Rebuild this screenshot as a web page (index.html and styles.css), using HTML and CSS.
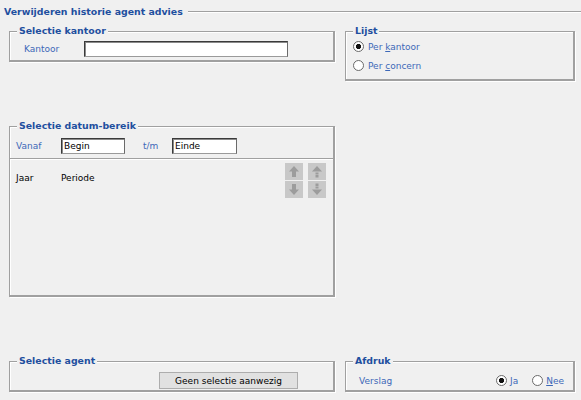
FILE: index.html
```html
<!DOCTYPE html>
<html lang="nl">
<head>
<meta charset="utf-8">
<title>Verwijderen historie agent advies</title>
<link rel="stylesheet" href="styles.css">
</head>
<body>
<div class="screen">
  <div class="title-bar">
    <h1 class="title">Verwijderen historie agent advies</h1>
    <span class="rule"></span>
  </div>

  <div class="columns">
    <div class="col-left">
      <section class="group group-kantoor">
        <div class="group-head"><span>Selectie kantoor</span></div>
        <div class="kantoor-row">
          <label class="label kantoor-label" for="kantoor">Kantoor</label>
          <input class="text-input kantoor-input" id="kantoor" type="text">
        </div>
      </section>

      <section class="group group-datum">
        <div class="group-head"><span>Selectie datum-bereik</span></div>
        <div class="range-row">
          <label class="label vanaf-label" for="vanaf">Vanaf</label>
          <input class="text-input date-input" id="vanaf" type="text" value="Begin">
          <label class="label tm-label" for="tm">t/m</label>
          <input class="text-input date-input date-end" id="tm" type="text" value="Einde">
        </div>
        <div class="separator"></div>
        <div class="period-list">
          <div class="period-cols">
            <span class="col-jaar">Jaar</span>
            <span class="col-periode">Periode</span>
          </div>
          <div class="sort-buttons">
            <button class="sort-btn" type="button" aria-label="Omhoog">
              <svg viewBox="0 0 18 17" width="18" height="17"><path d="M9 3 L14 8.5 H11 V14 H7 V8.5 H4 Z"/></svg>
            </button>
            <button class="sort-btn" type="button" aria-label="Naar boven">
              <svg viewBox="0 0 18 17" width="18" height="17"><path d="M9 3 L14 8.5 H4 Z"/><rect x="7.5" y="9.5" width="3" height="2"/><rect x="7.5" y="12" width="3" height="2.5"/></svg>
            </button>
            <button class="sort-btn" type="button" aria-label="Omlaag">
              <svg viewBox="0 0 18 17" width="18" height="17"><path d="M9 14 L14 8.5 H11 V3 H7 V8.5 H4 Z"/></svg>
            </button>
            <button class="sort-btn" type="button" aria-label="Naar beneden">
              <svg viewBox="0 0 18 17" width="18" height="17"><path d="M9 14 L14 8.5 H4 Z"/><rect x="7.5" y="5.5" width="3" height="2"/><rect x="7.5" y="2.5" width="3" height="2.5"/></svg>
            </button>
          </div>
        </div>
      </section>
    </div>

    <div class="col-right">
      <section class="group group-lijst">
        <div class="group-head"><span>Lijst</span></div>
        <div class="radio-list">
          <label class="radio-row"><input type="radio" name="lijst" checked><span>Per <u>k</u>antoor</span></label>
          <label class="radio-row"><input type="radio" name="lijst"><span>Per <u>c</u>oncern</span></label>
        </div>
      </section>
    </div>
  </div>

  <div class="bottom-row">
    <section class="group group-agent">
      <div class="group-head"><span>Selectie agent</span></div>
      <button class="push-btn" type="button">Geen selectie aanwezig</button>
    </section>
    <section class="group group-afdruk">
      <div class="group-head"><span>Afdruk</span></div>
      <div class="afdruk-row">
        <span class="label">Verslag</span>
        <div class="afdruk-options">
          <label class="radio-row"><input type="radio" name="verslag" checked><span><u>J</u>a</span></label>
          <label class="radio-row radio-nee"><input type="radio" name="verslag"><span><u>N</u>ee</span></label>
        </div>
      </div>
    </section>
  </div>
</div>
</body>
</html>
```

FILE: styles.css
```css
* {
  box-sizing: border-box;
}

html,
body {
  margin: 0;
}

body {
  background: #f0f0f0;
  font-family: "DejaVu Sans", Verdana, sans-serif;
  font-size: 9px;
  color: #000;
}

.screen {
  height: 400px;
  display: flex;
  flex-direction: column;
  padding-bottom: 8px;
}

/* window title with etched rule */
.title-bar {
  display: flex;
  align-items: center;
  height: 24px;
  padding-left: 4px;
}

.title {
  margin: 0;
  font-size: 9.4px;
  font-weight: bold;
  line-height: 14px;
  color: #1f4f9f;
}

.rule {
  flex: 1;
  height: 2px;
  margin: -1px 0 0 5px;
  border-top: 1px solid #a0a0a0;
  border-bottom: 1px solid #fff;
}

/* group boxes */
.group {
  border: 1px solid #a0a0a0;
  border-right-width: 2px;
  border-bottom-width: 2px;
  box-shadow: 1px 1px 0 #fff, inset 1px 1px 0 #fff;
}

.group-head {
  height: 14px;
  margin-top: -8px;
  padding-left: 7px;
  line-height: 14px;
}

.group-head span {
  background: #f0f0f0;
  padding: 0 2px;
  font-size: 9.4px;
  font-weight: bold;
  color: #1f4f9f;
}

.label {
  color: #3d68b8;
}

.text-input {
  height: 16px;
  margin: 0;
  padding: 0 2px;
  border: 1px solid #3a3a3a;
  border-right-color: #6a6a6a;
  border-bottom-color: #9a9a9a;
  box-shadow: inset 1px 1px 0 #8a8a8a;
  background: #fff;
  font: 9px "DejaVu Sans", Verdana, sans-serif;
  color: #000;
}

/* layout */
.columns {
  display: flex;
  gap: 10px;
  padding-left: 9px;
  margin-top: 7px;
}

.col-left {
  width: 326px;
  display: flex;
  flex-direction: column;
  gap: 64px;
}

.col-right {
  width: 230px;
}

/* Selectie kantoor */
.group-kantoor {
  height: 31px;
}

.kantoor-row {
  display: flex;
  align-items: center;
  margin-top: 3px;
  padding-left: 14px;
}

.kantoor-label {
  width: 60px;
}

.kantoor-input {
  width: 204px;
}

/* Selectie datum-bereik */
.group-datum {
  height: 171px;
}

.range-row {
  display: flex;
  align-items: center;
  height: 20px;
  margin-top: 3px;
  padding-left: 6px;
}

.vanaf-label {
  width: 45px;
}

.date-input {
  width: 64px;
}

.date-end {
  width: 65px;
}

.tm-label {
  width: 29px;
  margin-left: 18px;
}

.separator {
  height: 2px;
  margin-top: 2px;
  border-top: 1px solid #a0a0a0;
  border-bottom: 1px solid #fff;
}

.period-list {
  display: flex;
  justify-content: space-between;
  padding: 3px 7px 0 6px;
}

.period-cols {
  display: flex;
  margin-top: 8px;
  line-height: 14px;
}

.col-jaar {
  width: 45px;
}

.sort-buttons {
  display: grid;
  grid-template-columns: 18px 18px;
  grid-template-rows: 17px 17px;
  column-gap: 5px;
  row-gap: 1px;
}

.sort-btn {
  width: 18px;
  height: 17px;
  margin: 0;
  padding: 0;
  border: 0;
  background: #c8c8c8;
  display: block;
}

.sort-btn svg {
  display: block;
  fill: #9c9c9c;
}

/* Lijst */
.group-lijst {
  height: 50px;
}

.radio-list {
  margin-top: -1px;
  padding-left: 7px;
}

.radio-row {
  display: flex;
  align-items: center;
  height: 19px;
  color: #3d68b8;
}

.radio-row input {
  appearance: none;
  width: 11px;
  height: 11px;
  margin: 0 4px 0 0;
  border: 1px solid #6a6a6a;
  border-radius: 50%;
  background: #fff;
}

.radio-row input:checked {
  background: radial-gradient(circle, #111 0 2.4px, #fff 2.9px);
}

/* bottom groups */
.bottom-row {
  display: flex;
  gap: 10px;
  margin-top: auto;
  padding-left: 9px;
}

.group-agent {
  width: 326px;
  height: 31px;
}

.push-btn {
  display: block;
  width: 139px;
  height: 17px;
  margin: 4px 0 0 149px;
  padding: 0;
  border: 1px solid #adadad;
  background: #e1e1e1;
  font: 9px "DejaVu Sans", Verdana, sans-serif;
  color: #000;
}

.group-afdruk {
  width: 230px;
  height: 31px;
}

.afdruk-row {
  display: flex;
  align-items: center;
  height: 19px;
  margin-top: 3px;
  padding: 0 9px 0 13px;
}

.afdruk-options {
  display: flex;
  margin-left: auto;
}

.afdruk-options input {
  margin-right: 3px;
}

.radio-nee {
  margin-left: 14px;
}
```
